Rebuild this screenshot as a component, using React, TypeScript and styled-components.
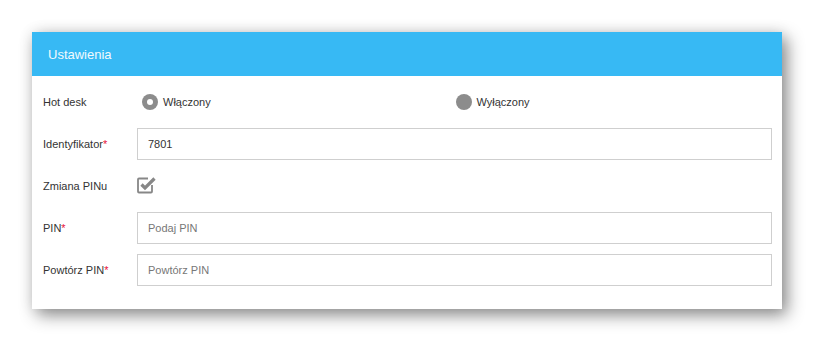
import React from 'react';
import styled, { createGlobalStyle } from 'styled-components';

const GlobalStyle = createGlobalStyle`
  html, body {
    margin: 0;
    padding: 0;
    background: #ffffff;
  }
  body {
    font-family: 'Liberation Sans', Arial, sans-serif;
  }
`;

const Page = styled.div`
  padding: 32px;
  width: 750px;
`;

const Card = styled.section`
  background: #fff;
  box-shadow: 5px 6px 16px rgba(0, 0, 0, 0.45), 0 0 14px rgba(0, 0, 0, 0.08);
`;

const Header = styled.header`
  height: 44px;
  background: #37b9f4;
  color: #f2f9fd;
  font-size: 13px;
  display: flex;
  align-items: center;
  padding-left: 16px;
`;

const Body = styled.div`
  display: flex;
  flex-direction: column;
  gap: 10px;
  padding: 10px 10px 23px 11px;
`;

const Row = styled.div`
  display: grid;
  grid-template-columns: 94px 1fr;
  align-items: center;
  height: 32px;
  font-size: 11px;
  color: #333;
`;

const Label = styled.label`
  font-size: 11px;
  color: #333;
`;

const Req = styled.span`
  color: #e8103a;
`;

const RadioGroup = styled.div`
  display: grid;
  grid-template-columns: 1fr 1fr;
`;

const RadioOption = styled.div<{ $indent: number }>`
  display: flex;
  align-items: center;
  gap: 5px;
  padding-left: ${({ $indent }) => $indent}px;
`;

const RadioDot = styled.span<{ $checked?: boolean }>`
  width: 16px;
  height: 16px;
  border-radius: 50%;
  background: #8c8c8c;
  display: flex;
  align-items: center;
  justify-content: center;
  &::after {
    content: '';
    width: 6px;
    height: 6px;
    border-radius: 50%;
    background: #fff;
    display: ${({ $checked }) => ($checked ? 'block' : 'none')};
  }
`;

const Input = styled.input`
  box-sizing: border-box;
  height: 32px;
  width: 100%;
  border: 1px solid #cfcfcf;
  padding: 0 10px;
  font-family: 'Liberation Sans', Arial, sans-serif;
  font-size: 11px;
  color: #333;
  outline: none;
  &::placeholder {
    color: #777;
  }
`;

const CheckWrap = styled.span`
  display: inline-flex;
  width: 20px;
  height: 20px;
  margin-top: -2px;
`;

const CheckIcon = () => (
  <CheckWrap>
    <svg width="20" height="20" viewBox="0 0 20 20">
      <path
        d="M15 10 V16.5 Q15 17.5 14 17.5 H2 Q1 17.5 1 16.5 V4.5 Q1 3.5 2 3.5 H11"
        fill="none"
        stroke="#878787"
        strokeWidth="1.8"
      />
      <path d="M4.5 9.5 L8 13 L17.5 3.5" fill="none" stroke="#878787" strokeWidth="3.2" />
    </svg>
  </CheckWrap>
);

export default function App() {
  return (
    <>
      <GlobalStyle />
      <Page>
        <Card>
          <Header>Ustawienia</Header>
          <Body>
            <Row>
              <Label>Hot desk</Label>
              <RadioGroup>
                <RadioOption $indent={5}>
                  <RadioDot $checked />
                  <span>Włączony</span>
                </RadioOption>
                <RadioOption $indent={1}>
                  <RadioDot />
                  <span>Wyłączony</span>
                </RadioOption>
              </RadioGroup>
            </Row>
            <Row>
              <Label>
                Identyfikator<Req>*</Req>
              </Label>
              <Input defaultValue="7801" />
            </Row>
            <Row>
              <Label>Zmiana PINu</Label>
              <CheckIcon />
            </Row>
            <Row>
              <Label>
                PIN<Req>*</Req>
              </Label>
              <Input placeholder="Podaj PIN" />
            </Row>
            <Row>
              <Label>
                Powtórz PIN<Req>*</Req>
              </Label>
              <Input placeholder="Powtórz PIN" />
            </Row>
          </Body>
        </Card>
      </Page>
    </>
  );
}
